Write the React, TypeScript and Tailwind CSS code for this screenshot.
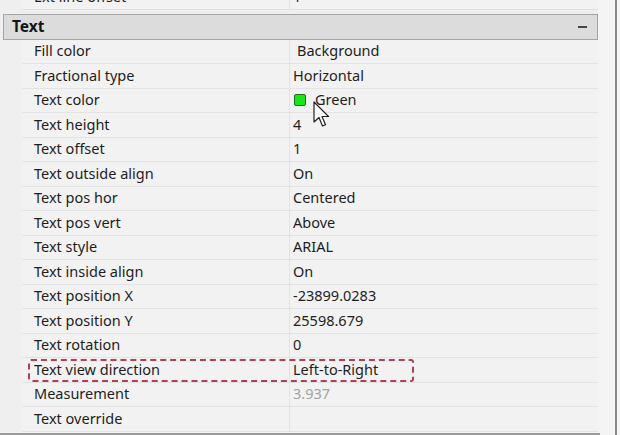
import React from "react";

const rows: { label: string; value: string; kind?: string }[] = [
  { label: "Fill color", value: "Background", kind: "indent" },
  { label: "Fractional type", value: "Horizontal" },
  { label: "Text color", value: "Green", kind: "color" },
  { label: "Text height", value: "4" },
  { label: "Text offset", value: "1" },
  { label: "Text outside align", value: "On" },
  { label: "Text pos hor", value: "Centered" },
  { label: "Text pos vert", value: "Above" },
  { label: "Text style", value: "ARIAL" },
  { label: "Text inside align", value: "On" },
  { label: "Text position X", value: "-23899.0283" },
  { label: "Text position Y", value: "25598.679" },
  { label: "Text rotation", value: "0" },
  { label: "Text view direction", value: "Left-to-Right" },
  { label: "Measurement", value: "3.937", kind: "gray" },
  { label: "Text override", value: "" },
];

function Row({ label, value, kind }: { label: string; value: string; kind?: string }) {
  return (
    <div className="flex h-[24.5px] items-center border-b border-[#e3e3e3] bg-[#f2f2f2]">
      <div className="flex h-full w-[268px] items-center border-r border-[#e3e3e3] pl-[12px] text-[#1e1e1e]">
        {label}
      </div>
      <div
        className={
          "flex h-full flex-1 items-center " +
          (kind === "indent" ? "pl-[7px] " : "pl-[3px] ") +
          (kind === "gray" ? "text-[#a3a3a3]" : "text-[#1e1e1e]")
        }
      >
        {kind === "color" && (
          <span className="mr-[9px] ml-[1px] inline-block h-[12px] w-[12px] rounded-[2px] border border-[#1d6e1d] bg-[#19e619]" />
        )}
        {value}
      </div>
    </div>
  );
}

export default function App() {
  return (
    <div
      className="relative flex h-[435px] w-[620px] overflow-hidden bg-[#efefef] text-[14.5px]"
      style={{ fontFamily: '"Noto Sans", "Open Sans", sans-serif' }}
    >
      <div className="flex w-[598px] flex-col">
        <div className="-mt-[15px] ml-[22px]">
          <Row label="Ext line offset" value="1" />
        </div>
        <div className="mt-[4px] ml-[3px] flex h-[26px] items-center justify-between border border-[#a5a5a5] bg-[#dcdcdc] pl-[8px] pr-[7px]">
          <span className="text-[15.5px] font-bold text-[#151515]">Text</span>
          <span className="mr-[3px] inline-block h-[2px] w-[9px] bg-[#444]" />
        </div>
        <div className="ml-[22px] flex flex-col">
          {rows.map((r) => (
            <Row key={r.label} {...r} />
          ))}
        </div>
      </div>
      <div className="flex flex-1">
        <div className="w-[17px] bg-[#f4f4f4]" />
        <div className="w-[2px] bg-[#8a8a8a]" />
        <div className="flex-1 bg-[#f7f7f7]" />
      </div>
      <div className="absolute bottom-0 left-0 h-[2px] w-[600px] bg-[#9a9a9a]" />
      <div className="pointer-events-none absolute left-[28px] top-[359px] h-[23px] w-[386px] rounded-[3px] border-[2.5px] border-dashed border-[#b23f55]" />
      <svg
        className="absolute left-[313px] top-[101px]"
        width="20"
        height="28"
        viewBox="0 0 20 28"
      >
        <path
          d="M1 1 L1 21 L6 16.5 L9.5 25 L12.5 23.8 L9 15.5 L15.5 15.5 Z"
          fill="#ffffff"
          stroke="#222"
          strokeWidth="1.2"
          strokeLinejoin="round"
        />
      </svg>
    </div>
  );
}
